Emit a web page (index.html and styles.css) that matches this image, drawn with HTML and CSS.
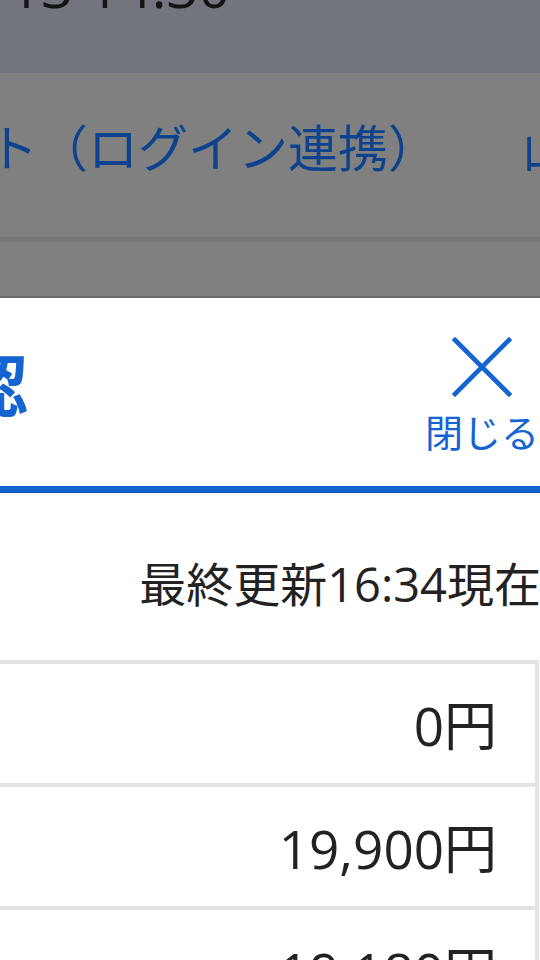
FILE: index.html
```html
<!DOCTYPE html>
<html lang="ja">
<head>
<meta charset="utf-8">
<title>確認</title>
<link rel="stylesheet" href="styles.css">
</head>
<body>
<div class="screen">
  <div class="backdrop">
    <div class="topbar"><div class="time">13 14:30</div></div>
    <div class="tabs">
      <span class="tab first">ト（ログイン連携）</span>
      <span class="tab">山</span>
    </div>
    <div class="tabline"></div>
    <div class="band"></div>
    <div class="shade"></div>
  </div>
  <div class="modal">
    <div class="header">
      <div class="title">認</div>
      <div class="close">
        <svg class="close-icon" width="60" height="60" viewBox="0 0 60 60" aria-hidden="true">
          <path d="M3 3 L57 57 M57 3 L3 57" stroke="#1464d2" stroke-width="4.6" stroke-linecap="square" fill="none"/>
        </svg>
        <div class="close-label">閉じる</div>
      </div>
    </div>
    <div class="rule"></div>
    <div class="updated">最終更新16:34現在</div>
    <div class="table">
      <div class="row"><span class="amount">0円</span></div>
      <div class="row"><span class="amount">19,900円</span></div>
      <div class="row"><span class="amount">19,180円</span></div>
    </div>
  </div>
</div>
</body>
</html>
```

FILE: styles.css
```css
html, body {
  margin: 0;
  padding: 0;
  background: #ffffff;
}
body {
  width: 540px;
  height: 960px;
  overflow: hidden;
  font-family: "Noto Sans CJK JP", "Noto Sans", sans-serif;
}
.screen {
  width: 540px;
  height: 960px;
  overflow: hidden;
  display: flex;
  flex-direction: column;
}
.backdrop {
  display: flex;
  flex-direction: column;
  flex-shrink: 0;
}
.topbar {
  height: 73px;
  background: #72757e;
  overflow: hidden;
}
.time {
  margin-top: -42px;
  padding-left: 9px;
  font-family: "Open Sans", "Noto Sans CJK JP", sans-serif;
  font-size: 56px;
  line-height: 56px;
  color: #141414;
  white-space: nowrap;
}
.tabs {
  height: 164px;
  box-sizing: border-box;
  padding-top: 47px;
  background: #808080;
  display: flex;
  gap: 84px;
  overflow: hidden;
  white-space: nowrap;
}
.tab {
  font-size: 50px;
  line-height: 50px;
  color: #0e428c;
  flex-shrink: 0;
}
.tab.first {
  margin-left: -12px;
}
.tabline {
  height: 5px;
  background: #777777;
}
.band {
  height: 54px;
  background: #808080;
}
.shade {
  height: 2px;
  background: #6a6a6a;
}
.modal {
  background: #ffffff;
  flex: 1;
  display: flex;
  flex-direction: column;
}
.header {
  height: 188px;
  display: flex;
  justify-content: space-between;
  align-items: flex-start;
  overflow: hidden;
}
.title {
  margin-left: -39px;
  padding-top: 50px;
  font-size: 67px;
  line-height: 67px;
  font-weight: 700;
  color: #1464d2;
}
.close {
  width: 116px;
  padding-top: 39px;
  display: flex;
  flex-direction: column;
  align-items: center;
}
.close-icon {
  display: block;
}
.close-label {
  margin-top: 15px;
  font-size: 38px;
  line-height: 38px;
  color: #1464d2;
  white-space: nowrap;
}
.rule {
  height: 7px;
  background: #1464d2;
  border-bottom: 1px solid #0f52b0;
  box-sizing: border-box;
}
.updated {
  margin-top: 68px;
  margin-right: -1px;
  font-family: "Open Sans", "Noto Sans CJK JP", sans-serif;
  font-size: 47px;
  line-height: 47px;
  color: #222222;
  text-align: right;
  white-space: nowrap;
}
.table {
  margin-top: 52px;
  margin-right: 1px;
  border-top: 4px solid #e3e3e3;
  border-right: 4px solid #e3e3e3;
}
.row {
  height: 123px;
  box-sizing: border-box;
  border-bottom: 4px solid #e3e3e3;
  display: flex;
  align-items: center;
  justify-content: flex-end;
  padding-right: 38px;
}
.amount {
  padding-top: 4px;
  font-family: "Open Sans", "Noto Sans CJK JP", sans-serif;
  font-size: 53px;
  line-height: 53px;
  color: #222222;
  white-space: nowrap;
}
```
